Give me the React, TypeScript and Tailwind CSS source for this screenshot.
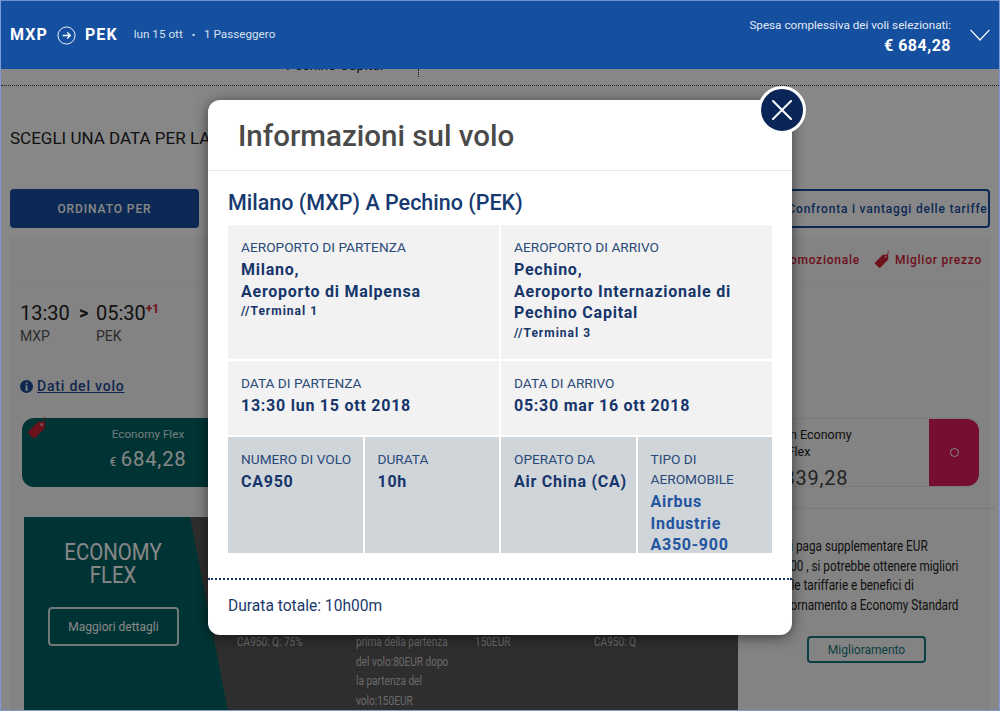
import React from "react";

const font = { fontFamily: "Roboto, 'Liberation Sans', sans-serif" };

function TagIcon({ className }: { className?: string }) {
  return (
    <svg viewBox="0 0 20 24" className={className} fill="none">
      <path
        d="M1 15.5 11 5.5 17.5 5 18 11.5 8 21.5Q7 22.5 6 21.5L1 16.5Q.5 16 1 15.5Z"
        fill="currentColor"
      />
      <circle cx="14.6" cy="8" r="1.2" fill="#f3d5d5" />
      <path d="M15 8C17 6 18 4 17.8 .5" stroke="currentColor" strokeWidth="1" />
    </svg>
  );
}

function Cell({
  label,
  className,
  children,
}: {
  label: string;
  className?: string;
  children: React.ReactNode;
}) {
  return (
    <div className={`overflow-hidden pl-[13px] pr-[2px] pt-[12px] ${className ?? ""}`}>
      <div className="text-[13.7px] leading-[20px] text-[#2b4a78]">{label}</div>
      {children}
    </div>
  );
}

function Value({ children, blue }: { children: React.ReactNode; blue?: boolean }) {
  return (
    <div
      className={`text-[16px] font-bold leading-[21.5px] tracking-[0.75px] ${
        blue ? "text-[#22549f]" : "text-[#16356a]"
      }`}
    >
      {children}
    </div>
  );
}

function Terminal({ children }: { children: React.ReactNode }) {
  return <div className="text-[12px] font-bold leading-[18px] tracking-[1px] text-[#16356a]">{children}</div>;
}

function FlightModal() {
  return (
    <div className="absolute left-[207px] top-[100px] z-20 h-[535px] w-[584px] rounded-xl bg-white shadow-[0_2px_14px_rgba(0,0,0,0.55)]">
      <button className="absolute -right-[14px] -top-[14px] flex h-[48px] w-[48px] items-center justify-center rounded-full border-[3px] border-white bg-[#0a2557]">
        <svg viewBox="0 0 20 20" className="h-[20px] w-[20px]" stroke="white" strokeWidth="2" strokeLinecap="round">
          <path d="M1 1 19 19M19 1 1 19" />
        </svg>
      </button>

      <div className="flex h-[71px] items-center border-b border-[#e8e8e8] pl-[30px] pt-[2px] text-[29.5px] font-medium text-[#4a4a4a]">
        Informazioni sul volo
      </div>

      <div className="px-5">
        <div className="flex h-[54px] items-center pt-[10px] text-[21.5px] font-medium text-[#163a70]">
          Milano (MXP) A Pechino (PEK)
        </div>

        <div className="grid h-[328px] grid-cols-4 grid-rows-[134px_74px_116px] gap-[2px]">
          <Cell label="AEROPORTO DI PARTENZA" className="col-span-2 bg-[#f2f2f3]">
            <div className="mt-[2px]">
              <Value>Milano,</Value>
              <Value>Aeroporto di Malpensa</Value>
            </div>
            <Terminal>//Terminal 1</Terminal>
          </Cell>
          <Cell label="AEROPORTO DI ARRIVO" className="col-span-2 bg-[#f2f2f3]">
            <div className="mt-[2px]">
              <Value>Pechino,</Value>
              <Value>Aeroporto Internazionale di</Value>
              <Value>Pechino Capital</Value>
            </div>
            <Terminal>//Terminal 3</Terminal>
          </Cell>
          <Cell label="DATA DI PARTENZA" className="col-span-2 bg-[#f2f2f3]">
            <div className="mt-[2px]">
              <Value>13:30 lun 15 ott 2018</Value>
            </div>
          </Cell>
          <Cell label="DATA DI ARRIVO" className="col-span-2 bg-[#f2f2f3]">
            <div className="mt-[2px]">
              <Value>05:30 mar 16 ott 2018</Value>
            </div>
          </Cell>
          <Cell label="NUMERO DI VOLO" className="bg-[#d0d5da]">
            <div className="mt-[2px]">
              <Value>CA950</Value>
            </div>
          </Cell>
          <Cell label="DURATA" className="bg-[#d0d5da]">
            <div className="mt-[2px]">
              <Value>10h</Value>
            </div>
          </Cell>
          <Cell label="OPERATO DA" className="bg-[#d0d5da]">
            <div className="mt-[2px]">
              <Value>Air China (CA)</Value>
            </div>
          </Cell>
          <Cell label="TIPO DI AEROMOBILE" className="bg-[#d0d5da]">
            <div className="mt-[2px]">
              <Value blue>Airbus Industrie A350-900</Value>
            </div>
          </Cell>
        </div>
      </div>

      <div className="mt-[25px] border-t-2 border-dotted border-[#16356a] pl-5 pt-[16px] text-[15.6px] leading-[20px] text-[#1b3a6b]">
        Durata totale: 10h00m
      </div>
    </div>
  );
}

export default function App() {
  return (
    <div
      style={font}
      className="relative h-[711px] w-[1000px] overflow-hidden border-x border-b border-[#7f9bd8] bg-white"
    >
      {/* Top bar */}
      <header className="relative z-30 -mx-px flex h-[69px] items-center justify-between border-t border-[#6f93c8] bg-[#154f9f] pl-[10px] pr-[10px] text-white">
        <div className="flex items-center">
          <span className="text-[16px] font-bold tracking-[1.1px]">MXP</span>
          <svg viewBox="0 0 20 20" className="ml-[9px] h-[19px] w-[19px]" fill="none" stroke="white">
            <circle cx="10" cy="10" r="9" strokeWidth="1" />
            <path d="M6 10H14M10.8 6.8 14 10 10.8 13.2" strokeWidth="1.4" />
          </svg>
          <span className="ml-[9px] text-[16px] font-bold tracking-[1.1px]">PEK</span>
          <span className="ml-[16px] text-[11.7px] text-[#d6e1f0]">lun 15 ott</span>
          <span className="mx-[9px] text-[10px] text-[#d6e1f0]">•</span>
          <span className="text-[11.7px] text-[#d6e1f0]">1 Passeggero</span>
        </div>
        <div className="flex items-center">
          <div className="pt-[2px] text-right">
            <div className="text-[11.7px] leading-[18px] text-[#e3eaf5]">Spesa complessiva dei voli selezionati:</div>
            <div className="mt-[1px] text-[16px] font-bold leading-[22px] tracking-[0.5px]">€ 684,28</div>
          </div>
          <svg viewBox="0 0 20 12" className="ml-[19px] h-[12px] w-[20px]" fill="none" stroke="white" strokeWidth="1.2">
            <path d="M.5 .8 10 11 19.5 .8" />
          </svg>
        </div>
      </header>

      {/* Page behind the dialog */}
      <main className="text-[#222]">
        <div className="flex h-[17px] overflow-hidden border-b border-dotted border-[#333] pl-[285px]">
          <span className="-mt-[14px] text-[14px] leading-[20px]">Pechino Capital</span>
          <span className="ml-[35px] h-[8px] border-l border-dotted border-[#333]" />
        </div>

        <div className="mt-[42px] pl-[9px] text-[17px] leading-[20px]">SCEGLI UNA DATA PER LA TRATTA</div>

        <div className="mt-[41px] flex justify-between pl-[9px] pr-[9px]">
          <div className="flex h-[39px] w-[189px] items-center justify-center rounded bg-[#154f9f] text-[12px] font-medium tracking-[0.9px] text-white">
            ORDINATO PER
          </div>
          <div className="flex h-[39px] w-[205px] items-center justify-center whitespace-nowrap rounded border-2 border-[#154f9f] text-[12px] font-medium tracking-[0.8px] text-[#154f9f]">
            Confronta i vantaggi delle tariffe
          </div>
        </div>

        <div className="mx-[9px] mt-[9px] flex h-[47px] items-center justify-end gap-[14px] border-b border-[#eeeeee] bg-[#f7f7f7] pr-[8px] text-[12px] font-medium tracking-[0.75px] text-[#cf2036]">
          <span>Promozionale</span>
          <span className="flex items-center gap-[5px]">
            <TagIcon className="h-[22px] w-[16px]" />
            Miglior prezzo
          </span>
        </div>

        <section className="mx-[9px] h-[426px] bg-[#f7f7f7] pt-[17px]">
          <div className="pl-[10px]">
            <div className="flex items-start text-[20px] leading-[24px]">
              <span className="w-[47px]">13:30</span>
              <span className="ml-[12px] w-[17px] text-[18px] font-bold">&gt;</span>
              <span>05:30</span>
              <span className="text-[12px] font-bold leading-[16px] text-[#d3202f]">+1</span>
            </div>
            <div className="mt-[1px] flex text-[14px] leading-[20px] text-[#555]">
              <span className="w-[76px]">MXP</span>
              <span>PEK</span>
            </div>
            <div className="mt-[30px] flex items-center text-[14px] font-medium tracking-[0.8px] text-[#1e4a96]">
              <svg viewBox="0 0 14 14" className="h-[13px] w-[13px]">
                <circle cx="7" cy="7" r="7" fill="#1e4a96" />
                <path d="M5.6 5.8H8V10.4H9V11.4H5.2V10.4H6.2V6.8H5.6ZM6.2 2.8H8V4.6H6.2Z" fill="white" />
              </svg>
              <span className="pl-[4px] underline">Dati del volo</span>
            </div>
          </div>

          <div className="mt-[21px] flex justify-between pl-[12px] pr-[11px]">
            <div className="relative flex h-[69px] w-[252px] flex-col items-center justify-center rounded-xl bg-[#006262] pb-[5px] text-white">
              <TagIcon className="absolute left-[5px] -top-[2px] h-[25px] w-[20px] text-[#cf2036]" />
              <span className="text-[11.7px] leading-[18px] text-[#d9e8e8]">Economy Flex</span>
              <span className="mt-[3px] text-[20.3px] leading-[26px] tracking-[0.8px]">
                <span className="text-[12px]">€ </span>684,28
              </span>
            </div>
            <div className="flex h-[69px] w-[310px] rounded-r-xl border-y border-[#e6e6e6]">
              <div className="flex flex-1 flex-col items-center pt-[7px] text-[12.5px] leading-[17px]">
                <span>Premium Economy</span>
                <span>Flex</span>
                <span className="ml-[16px] mt-[5px] text-[20px] leading-[26px] tracking-[0.8px] text-[#444]">€ 839,28</span>
              </div>
              <div className="flex w-[50px] items-center justify-center rounded-r-xl bg-[#df1e5a]">
                <span className="h-[9px] w-[9px] rounded-full border border-white" />
              </div>
            </div>
          </div>

          <div className="mt-[30px] flex pl-[14px]">
            <div className="flex h-[194px] w-[714px] shrink-0 bg-[#575757] text-white">
              <div className="flex w-[204px] flex-col items-start bg-[#006262] [clip-path:polygon(0_0,166px_0,100%_100%,0_100%)]">
                <div className="mt-[24px] w-[178px] scale-x-[0.85] text-center text-[24px] leading-[23px]">
                  ECONOMY
                  <br />
                  FLEX
                </div>
                <div className="ml-[24px] mt-[20px] flex h-[39px] w-[131px] items-center justify-center rounded border-2 border-[#d5e5e5] text-[12px]">
                  Maggiori dettagli
                </div>
              </div>
              <div className="grid flex-1 grid-cols-[repeat(4,119px)] pl-[9px] pt-[116px] text-[12px] leading-[19.5px] text-[#c8c8c8]">
                <span className="origin-top-left scale-x-[0.84] whitespace-nowrap">CA950: Q: 75%</span>
                <span className="origin-top-left scale-x-[0.84] whitespace-nowrap">
                  prima della partenza
                  <br />
                  del volo:80EUR dopo
                  <br />
                  la partenza del
                  <br />
                  volo:150EUR
                </span>
                <span className="origin-top-left scale-x-[0.84] whitespace-nowrap">150EUR</span>
                <span className="origin-top-left scale-x-[0.84] whitespace-nowrap">CA950: Q</span>
              </div>
            </div>
            <div className="-mt-[9px] mr-[13px] flex-1 border-t border-[#e6e6e6] pl-[30px] pt-[28px]">
              <div className="origin-top-left scale-x-[0.84] whitespace-nowrap text-[14px] leading-[19.5px]">
                Se si paga supplementare EUR
                <br />
                155,00 , si potrebbe ottenere migliori
                <br />
                regole tariffarie e benefici di
                <br />
                aggiornamento a Economy Standard
              </div>
              <div className="ml-[39px] mt-[21px] flex h-[27px] w-[119px] items-center justify-center rounded border-2 border-[#16777f] text-[12px] text-[#16777f]">
                Miglioramento
              </div>
            </div>
          </div>
        </section>
      </main>

      <div className="absolute inset-0 z-10 bg-black/[0.47]" />

      <FlightModal />
    </div>
  );
}
